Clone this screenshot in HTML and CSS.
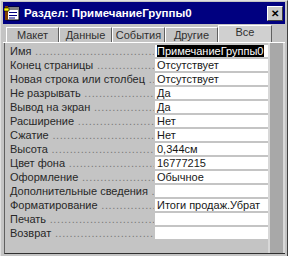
FILE: index.html
```html
<!DOCTYPE html>
<html lang="ru">
<head>
<meta charset="UTF-8">
<title>Раздел: ПримечаниеГруппы0</title>
<link rel="stylesheet" href="styles.css">
</head>
<body>
<div class="window">
    <div class="titlebar">
        <svg class="app-icon" width="16" height="16" viewBox="0 0 16 16">
            <rect x="3" y="2" width="12" height="13" fill="#ffffff" stroke="#000000"/>
            <rect x="3" y="2" width="12" height="3" fill="#808080"/>
            <line x1="5" y1="7.5" x2="13" y2="7.5" stroke="#000080"/>
            <line x1="5" y1="10.5" x2="13" y2="10.5" stroke="#000080"/>
            <line x1="5" y1="13" x2="11" y2="13" stroke="#000080"/>
            <rect x="1" y="1" width="3" height="14" fill="#804000"/>
            <rect x="0" y="3" width="5" height="3" fill="#ffff00" stroke="#000000" stroke-width="0.6"/>
        </svg>
        <span class="title">Раздел: ПримечаниеГруппы0</span>
        <span class="close-btn">&#x2715;</span>
    </div>

    <div class="tabs">
        <div class="tab">Макет</div>
        <div class="tab">Данные</div>
        <div class="tab">События</div>
        <div class="tab">Другие</div>
        <div class="tab active">Все</div>
    </div>

    <div class="sheet">
        <div class="props">
            <div class="row"><span class="label">Имя</span><span class="value"><span class="selected">ПримечаниеГруппы0</span></span></div>
            <div class="row"><span class="label">Конец страницы</span><span class="value">Отсутствует</span></div>
            <div class="row"><span class="label">Новая строка или столбец</span><span class="value">Отсутствует</span></div>
            <div class="row"><span class="label">Не разрывать</span><span class="value">Да</span></div>
            <div class="row"><span class="label">Вывод на экран</span><span class="value">Да</span></div>
            <div class="row"><span class="label">Расширение</span><span class="value">Нет</span></div>
            <div class="row"><span class="label">Сжатие</span><span class="value">Нет</span></div>
            <div class="row"><span class="label">Высота</span><span class="value">0,344см</span></div>
            <div class="row"><span class="label">Цвет фона</span><span class="value">16777215</span></div>
            <div class="row"><span class="label">Оформление</span><span class="value">Обычное</span></div>
            <div class="row"><span class="label">Дополнительные сведения</span><span class="value"></span></div>
            <div class="row"><span class="label">Форматирование</span><span class="value">Итоги продаж.Убрат</span></div>
            <div class="row"><span class="label">Печать</span><span class="value"></span></div>
            <div class="row"><span class="label">Возврат</span><span class="value"></span></div>
        </div>
        <div class="strip"></div>
    </div>
</div>
</body>
</html>
```

FILE: styles.css
```css
body {
    margin: 0;
    padding: 0;
    font-family: "Liberation Sans", Arial, sans-serif;
    font-size: 11px;
    background-color: #c0c0c0;
}
.window {
    width: 288px;
    height: 256px;
    box-sizing: border-box;
    background-color: #c4c4c4;
    border-top: 1px solid #e0e0e0;
    border-left: 1px solid #e0e0e0;
    border-right: 1px solid #404040;
    padding: 1px 2px 0 2px;
    overflow: hidden;
}
.titlebar {
    height: 22px;
    background-color: #000080;
    display: flex;
    align-items: center;
    padding: 0 2px 0 1px;
}
.app-icon {
    flex: none;
}
.title {
    margin-left: 4px;
    color: #ffffff;
    font-weight: bold;
    font-size: 11.5px;
    white-space: nowrap;
    flex: 1;
}
.close-btn {
    width: 16px;
    height: 15px;
    box-sizing: border-box;
    background-color: #c8c8c8;
    border-top: 1px solid #ffffff;
    border-left: 1px solid #ffffff;
    border-right: 1px solid #404040;
    border-bottom: 1px solid #404040;
    color: #000000;
    font-size: 10px;
    font-weight: bold;
    line-height: 13px;
    text-align: center;
}
.tabs {
    display: flex;
    height: 18px;
    padding-left: 3px;
    border-bottom: 1px solid #ffffff;
    box-sizing: border-box;
    margin-top: 1px;
}
.tab {
    width: 51px;
    margin-top: 2px;
    border-top: 1px solid #ffffff;
    border-left: 1px solid #ffffff;
    border-right: 1px solid #606060;
    text-align: center;
    line-height: 14px;
    color: #303030;
}
.tab.active {
    width: 52px;
    margin-top: 0;
    line-height: 12px;
    background-color: #d0d0d0;
}
.sheet {
    display: flex;
    height: 210px;
    border-left: 1px solid #606060;
    border-bottom: 1px solid #303030;
    margin-left: 1px;
}
.props {
    width: 263px;
    padding-top: 1px;
}
.row {
    display: flex;
    height: 14px;
}
.label {
    flex: 1;
    padding-left: 5px;
    white-space: nowrap;
    overflow: hidden;
    line-height: 14px;
    color: #282828;
}
.label::after {
    content: " ..........................................................................";
    color: #7a7a7a;
    letter-spacing: 0.6px;
}
.value {
    width: 113px;
    height: 12px;
    margin: 1px 0 1px 1px;
    background-color: #ffffff;
    padding-left: 2px;
    line-height: 12px;
    white-space: nowrap;
    overflow: hidden;
    box-sizing: border-box;
    color: #181818;
}
.selected {
    background-color: #000000;
    color: #ffffff;
    padding-right: 1px;
}
.strip {
    flex: 1;
    background-color: #a8a8a8;
    border-left: 2px solid #d8d8d8;
    border-right: 2px solid #d8d8d8;
}
```
